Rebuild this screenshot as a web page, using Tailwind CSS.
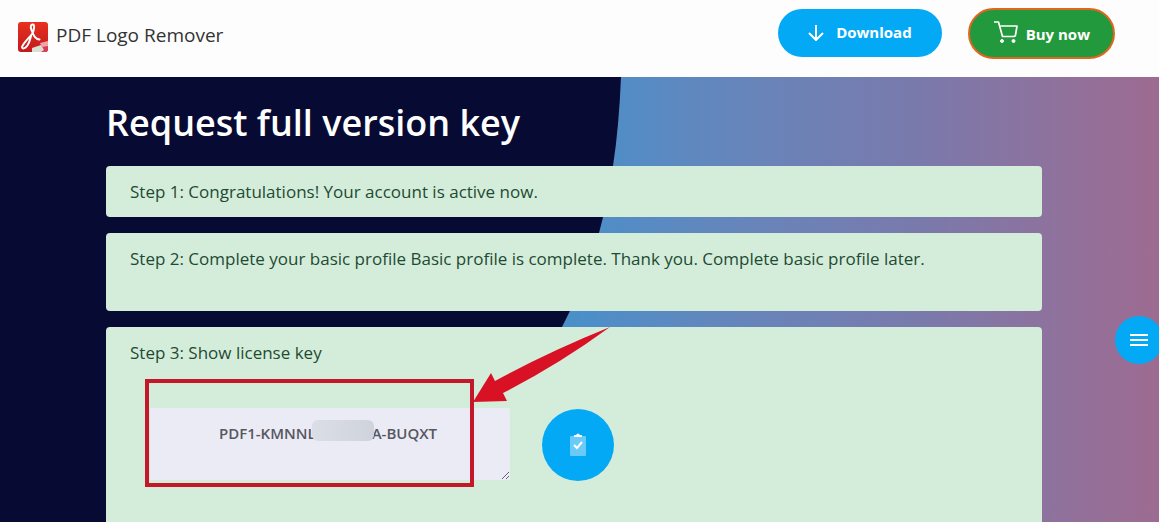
<!DOCTYPE html>
<html lang="en">
<head>
<meta charset="utf-8">
<meta name="viewport" content="width=device-width, initial-scale=1">
<title>PDF Logo Remover</title>
<script src="https://cdn.jsdelivr.net/npm/@tailwindcss/browser@4"></script>
</head>
<body class="flex h-screen flex-col overflow-hidden font-['Open_Sans','Noto_Sans',sans-serif] text-[#212529]">
<header class="flex h-[77px] shrink-0 items-start justify-between bg-[#fdfdfd] pl-[18px] pr-11">
  <a href="#" class="flex items-center gap-2 pt-[19px] text-[19px] leading-8 text-[#333]">
    <svg class="size-[30px]" viewBox="0 0 30 30" aria-hidden="true">
      <defs><linearGradient id="red" x1="0" y1="0" x2="0" y2="1"><stop offset="0" stop-color="#e8301f"/><stop offset="1" stop-color="#c11a1c"/></linearGradient></defs>
      <rect width="30" height="30" rx="3" fill="url(#red)"/>
      <path d="M15 30l10-9 5 1v5q0 3-3 3z" fill="#d83d55"/>
      <path d="M14 26l9-3 3 5-3 2h-9z" fill="#d9dfd2"/>
      <path d="M22 21l8-2v5l-6 1z" fill="#f0a4a8"/>
      <path d="M4 25c2-5 7-9 10-13 2-3 3-9 1-9.500-2-.5-3 2-1.500 5.500 2 5 3 9 8 9.500M4 25c0 2 3 2 5-1 2-2.500 3-6 4-10" fill="none" stroke="#fff" stroke-width="2" stroke-linecap="round" stroke-linejoin="round"/>
    </svg>
    <span class="pb-1">PDF Logo Remover</span>
  </a>
  <div class="flex items-start gap-[26px] pt-2">
    <button type="button" class="mt-px flex h-12 items-center gap-3 rounded-full bg-[#04a9f5] px-[30px] text-[15px] font-bold text-white">
      <svg class="h-4 w-4" viewBox="0 0 16 16" fill="none" stroke="currentColor" stroke-width="2" aria-hidden="true"><path d="M8 0v15M1 8l7 7 7-7"/></svg>
      <span class="pb-0.5">Download</span>
    </button>
    <button type="button" class="flex h-[51px] items-center gap-2 rounded-full border-2 border-[#e0671f] bg-[#23993d] pl-6 pr-[23px] text-[15px] font-bold text-white">
      <svg class="mb-1 h-6 w-6" viewBox="0 0 24 24" fill="none" stroke="currentColor" stroke-width="1.700" stroke-linejoin="round" aria-hidden="true"><path d="M0 2h4.500l4 14.500h12.500M5.500 6H23l-1.500 9q-.3 1.500-1.800 1.500"/><circle cx="8" cy="21" r="1.500" fill="currentColor" stroke-width="1"/><circle cx="19.500" cy="21" r="1.500" fill="currentColor" stroke-width="1"/></svg>
      <span class="pt-0.5">Buy now</span>
    </button>
  </div>
</header>

<main class="relative flex flex-1 flex-col overflow-hidden bg-linear-to-r from-[#4b8fc9] from-50% via-[#7b79ab] via-80% to-[#9d6b91] to-100% pr-[11px]">
  <svg class="absolute left-0 top-0 h-[445px] w-[621px]" viewBox="0 0 621 445" aria-hidden="true">
    <path d="M0 0H621Q619 50 613 89Q608 123 599 156Q586 204 562 250Q520 350 450 445H0Z" fill="#070b33"/>
  </svg>
  <div class="relative mx-auto flex w-full max-w-[936px] flex-1 flex-col gap-4 pt-[21px]">
    <h1 class="pb-0.5 text-[36px] font-semibold leading-[50px] text-white">Request full version key</h1>
    <section class="rounded bg-[#d4eddb] px-6 py-3 text-[17px] leading-[27px] text-[#1f4a32]">Step 1: Congratulations! Your account is active now.</section>
    <section class="h-[78px] shrink-0 rounded bg-[#d4eddb] px-6 py-3 text-[17px] leading-[27px] text-[#1f4a32]">Step 2: Complete your basic profile Basic profile is complete. Thank you. Complete basic profile later.</section>
    <section class="relative flex-1 rounded-t bg-[#d4eddb] px-6 py-3 text-[17px] leading-[27px] text-[#1f4a32]">
      <label for="license">Step 3: Show license key</label>
      <div class="flex items-start gap-8 pl-5 pt-[42px]">
        <textarea id="license" class="h-[72px] w-[360px] resize rounded-xs bg-[#ebebf5] py-3 pl-4 pr-5 text-center text-[15px] font-semibold leading-[26px] text-[#57575f]">PDF1-KMNNLXXXXXXA-BUQXT</textarea>
        <button type="button" aria-label="Copy license key" class="mt-px flex size-[72px] items-center justify-center rounded-full bg-[#04a9f5]">
          <svg class="h-6 w-4" viewBox="0 0 16 24" aria-hidden="true"><rect y="3" width="16" height="20" rx="1" fill="#6bcbf8"/><path d="M4 4V2h2q2-3 4 0h2v2z" fill="#fff"/><path d="M4 12l3 3 5-6" fill="none" stroke="#fff" stroke-width="2"/></svg>
        </button>
      </div>
      <!-- Masked part of the key -->
      <div class="absolute left-[206px] top-[93px] h-[21px] w-[62px] rounded-md bg-linear-to-r from-[#dcdee7] to-[#ced3dc]"></div>
      <!-- Highlight frame and pointer -->
      <div class="pointer-events-none absolute left-[39px] top-[52px] h-[108px] w-[329px] border-4 border-[#c4172a]"></div>
      <svg class="pointer-events-none absolute left-[367px] top-0 h-[76px] w-[137px]" viewBox="0 0 137 76" aria-hidden="true"><path d="M0 75L18 46L22 54Q75 25 137 0Q85 38 30 66L34 74Z" fill="#d81224"/></svg>
    </section>
  </div>
  <button type="button" aria-label="Open menu" class="absolute -right-1 top-[239px] flex size-12 items-center justify-center rounded-full bg-[#04a9f5] text-white">
    <svg class="h-[14px] w-[18px]" viewBox="0 0 18 14" stroke="currentColor" stroke-width="2" aria-hidden="true"><path d="M0 2h18M0 7h18M0 12h18"/></svg>
  </button>
</main>
</body>
</html>
